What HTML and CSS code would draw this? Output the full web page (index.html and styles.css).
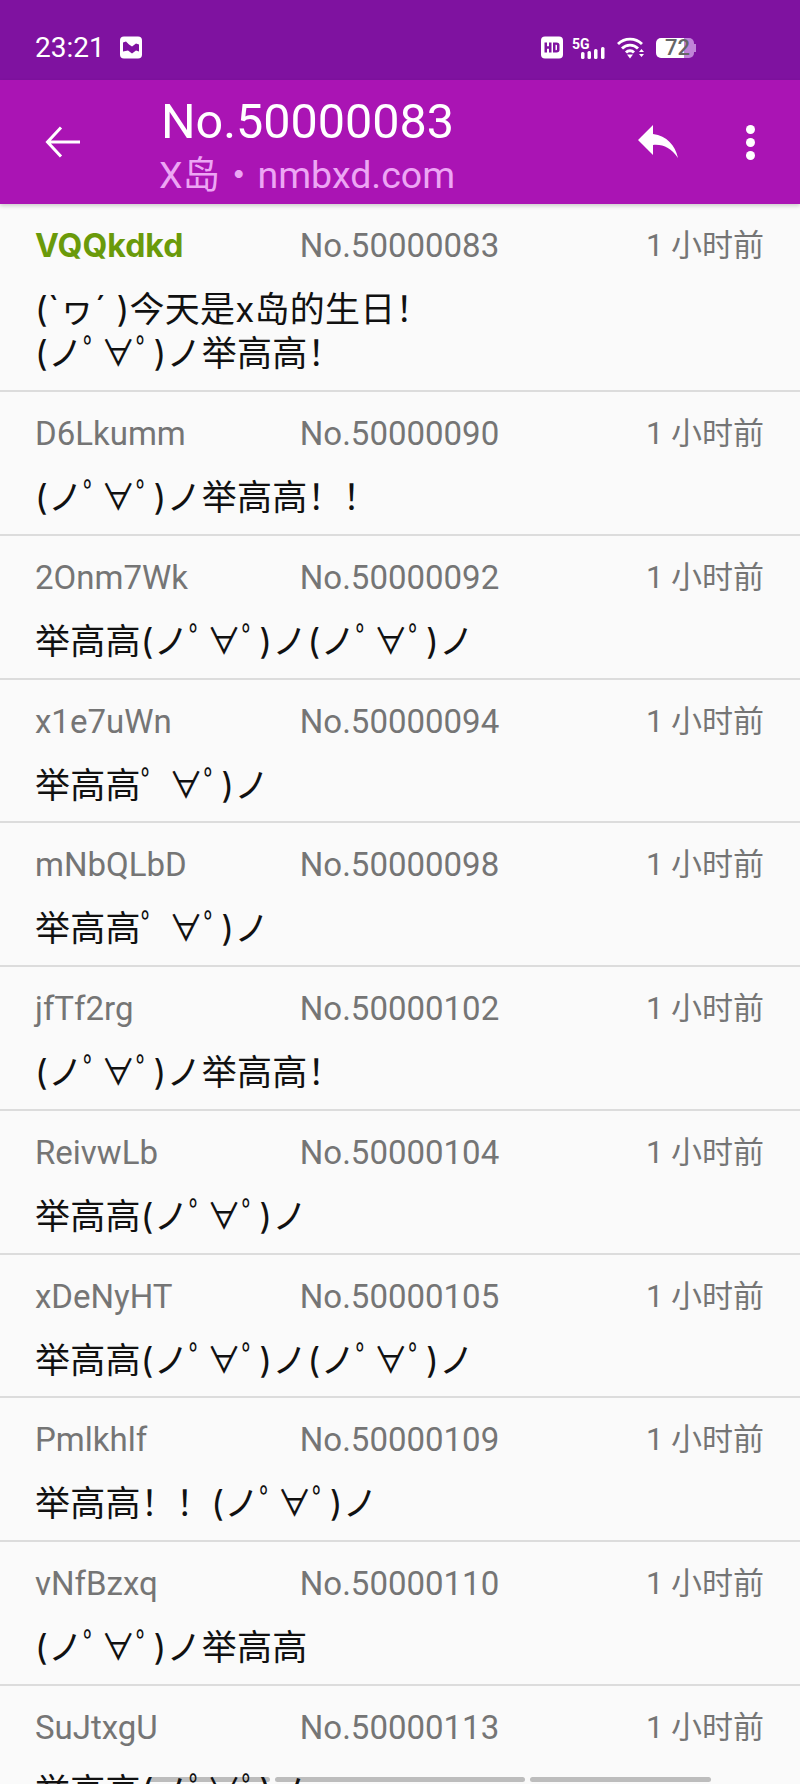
FILE: index.html
```html
<!DOCTYPE html>
<html lang="zh-CN">
<head>
<meta charset="utf-8">
<title>No.50000083</title>
<link rel="stylesheet" href="styles.css">
</head>
<body>
<div class="phone">
  <div class="status">
    <div class="status-left">
      <span class="clock">23:21</span>
      <svg class="ic-app" viewBox="0 0 22 22"><rect width="22" height="22" rx="4" fill="#fff"/><path d="M3 6l3-1 3 3 3 2 4-3 3 1v7l-3-1-4 3-4-3-5 1z" fill="#7f12a0"/></svg>
    </div>
    <div class="status-right">
      <svg class="ic-hd" viewBox="0 0 22 22"><rect width="22" height="22" rx="4" fill="#fff"/><path d="M3.500 6h2.500v3.800h2V6h2.500v10H8v-3.800H6V16H3.500zM12 6h3.500c2 0 3 1 3 2.500v5c0 1.500-1 2.500-3 2.500H12zm2.500 2.200v5.600c1.300 0 1.500-.3 1.500-1v-3.600c0-.7-.2-1-1.500-1z" fill="#7f12a0" fill-rule="evenodd"/></svg>
      <svg class="ic-sig" viewBox="0 0 36 24"><rect x="9" y="16" width="3.500" height="7" rx="1.500" fill="#fff"/><rect x="15.500" y="15" width="3.500" height="8" rx="1.500" fill="#fff"/><rect x="22" y="13" width="3.500" height="10" rx="1.500" fill="#fff"/><rect x="29" y="11" width="3.500" height="12" rx="1.500" fill="#fff"/><text x="0" y="13" class="sig-text">5G</text></svg>
      <svg class="ic-wifi" viewBox="0 0 28 22"><path d="M1 7a17 17 0 0 1 24 0M5 11.500a11 11 0 0 1 16 0M9 15.500a5.500 5.500 0 0 1 8 0" fill="none" stroke="#fff" stroke-width="2.800"/><path d="M10 17.500h6L13 21.500zM24.500 12l2.500 3h-5zM22 17h5l-2.500 3z" fill="#fff"/></svg>
      <div class="battery"><span class="batt-fill"><span class="batt-num">72</span></span><span class="batt-rest"></span><span class="batt-cap"></span></div>
    </div>
  </div>
  <header class="appbar">
    <svg class="ic-back" viewBox="0 0 36 36"><path d="M4 18h32M17 3.500L3.500 18 17 32.500" fill="none" stroke="#fff" stroke-width="3"/></svg>
    <div class="titles">
      <div class="title">No.50000083</div>
      <div class="subtitle">X岛・nmbxd.com</div>
    </div>
    <svg class="ic-reply" viewBox="0 0 40 34"><path d="M15 0L0 15l15 15V20c10-1 18 3 25 13C37 20 29 11 15 9z" fill="#fff"/></svg>
    <div class="ic-more"><i></i><i></i><i></i></div>
  </header>
  <main class="list">
    <article class="row first"><div class="meta"><span class="name po">VQQkdkd</span><span class="no">No.50000083</span><span class="time">1 小时前</span></div><div class="body">(`ヮ´ )今天是x岛的生日！<br>(ノﾟ∀ﾟ)ノ举高高！</div></article>
    <article class="row"><div class="meta"><span class="name">D6Lkumm</span><span class="no">No.50000090</span><span class="time">1 小时前</span></div><div class="body">(ノﾟ∀ﾟ)ノ举高高！！</div></article>
    <article class="row"><div class="meta"><span class="name">2Onm7Wk</span><span class="no">No.50000092</span><span class="time">1 小时前</span></div><div class="body">举高高(ノﾟ∀ﾟ)ノ(ノﾟ∀ﾟ)ノ</div></article>
    <article class="row"><div class="meta"><span class="name">x1e7uWn</span><span class="no">No.50000094</span><span class="time">1 小时前</span></div><div class="body">举高高ﾟ ∀ﾟ)ノ</div></article>
    <article class="row"><div class="meta"><span class="name">mNbQLbD</span><span class="no">No.50000098</span><span class="time">1 小时前</span></div><div class="body">举高高ﾟ ∀ﾟ)ノ</div></article>
    <article class="row"><div class="meta"><span class="name">jfTf2rg</span><span class="no">No.50000102</span><span class="time">1 小时前</span></div><div class="body">(ノﾟ∀ﾟ)ノ举高高！</div></article>
    <article class="row"><div class="meta"><span class="name">ReivwLb</span><span class="no">No.50000104</span><span class="time">1 小时前</span></div><div class="body">举高高(ノﾟ∀ﾟ)ノ</div></article>
    <article class="row"><div class="meta"><span class="name">xDeNyHT</span><span class="no">No.50000105</span><span class="time">1 小时前</span></div><div class="body">举高高(ノﾟ∀ﾟ)ノ(ノﾟ∀ﾟ)ノ</div></article>
    <article class="row"><div class="meta"><span class="name">Pmlkhlf</span><span class="no">No.50000109</span><span class="time">1 小时前</span></div><div class="body">举高高！！(ノﾟ∀ﾟ)ノ</div></article>
    <article class="row"><div class="meta"><span class="name">vNfBzxq</span><span class="no">No.50000110</span><span class="time">1 小时前</span></div><div class="body">(ノﾟ∀ﾟ)ノ举高高</div></article>
    <article class="row"><div class="meta"><span class="name">SuJtxgU</span><span class="no">No.50000113</span><span class="time">1 小时前</span></div><div class="body">举高高(ノﾟ∀ﾟ)ノ</div></article>
  </main>
  <div class="pager"><i class="seg a"></i><i class="seg b"></i><i class="seg c"></i></div>
</div>
</body>
</html>
```
FILE: styles.css
```css
* { box-sizing: border-box; }
html, body { margin: 0; padding: 0; }
body { font-family: Roboto, "Noto Sans CJK SC", sans-serif; background: #fafafa; }
.phone { position: relative; width: 800px; height: 1784px; overflow: hidden; background: #fafafa; }
.status { height: 80px; background: #7f12a0; display: flex; justify-content: space-between; align-items: center; padding: 15px 104px 0 35px; color: #fff; }
.status-left { display: flex; align-items: center; gap: 15px; }
.clock { font-size: 28px; line-height: 32px; }
.ic-app, .ic-hd { width: 22px; height: 23px; display: block; }
.status-right { display: flex; align-items: center; gap: 9px; }
.ic-sig { width: 36px; height: 24px; display: block; }
.sig-text { font-size: 14px; font-weight: 700; fill: #fff; }
.ic-wifi { width: 28px; height: 22px; display: block; }
.battery { display: flex; align-items: center; height: 20px; margin-left: 2px; }
.batt-fill { width: 28px; height: 20px; background: #fff; border-radius: 5px 0 0 5px; position: relative; display: block; }
.batt-num { position: absolute; left: 9px; top: -3px; font-size: 22px; font-weight: 500; color: #666; line-height: 26px; }
.batt-rest { width: 10px; height: 20px; background: #c084d8; border-radius: 0 5px 5px 0; display: block; }
.batt-cap { width: 2px; height: 8px; background: #c084d8; display: block; }
.appbar { height: 124px; background: #aa14b4; display: flex; align-items: center; padding-left: 44px; color: #fff; box-shadow: 0 2px 4px rgba(0,0,0,.18); position: relative; }
.ic-back { width: 36px; height: 36px; display: block; flex: none; }
.titles { margin-left: 81px; flex: 1; min-width: 0; padding-top: 10px; }
.title { font-size: 48.500px; line-height: 50px; }
.subtitle { font-size: 37.500px; line-height: 44px; margin-top: 5.500px; margin-left: -2px; color: #eda6f4; }
.ic-reply { width: 40px; height: 34px; display: block; flex: none; margin-right: 68px; }
.ic-more { width: 10px; display: flex; flex-direction: column; gap: 4px; margin-right: 44px; flex: none; }
.ic-more i { width: 9px; height: 9px; border-radius: 50%; background: #fff; display: block; }
.list { position: relative; z-index: 1; }
.row { height: 143.750px; padding: 22px 36px 0 35px; border-bottom: 2px solid #dcdcdc; }
.row.first { height: 188px; }
.meta { display: grid; grid-template-columns: 1fr auto 1fr; align-items: center; font-size: 33px; line-height: 40px; color: #757575; }
.time { text-align: right; font-size: 31px; }
.name.po { color: #6a9a0a; font-weight: 700; font-family: Inter, sans-serif; font-size: 32px; }
.body { margin-top: 21px; font-family: Inter, "Noto Sans CJK SC", sans-serif; font-size: 35px; letter-spacing: .25px; line-height: 44px; color: #111; }
.pager { position: absolute; left: 148px; bottom: 2px; display: flex; gap: 5px; }
.seg { height: 5px; background: #bdbdbd; display: block; border-radius: 3px; }
.seg.a { width: 122px; }
.seg.b { width: 250px; }
.seg.c { width: 181px; }
```
